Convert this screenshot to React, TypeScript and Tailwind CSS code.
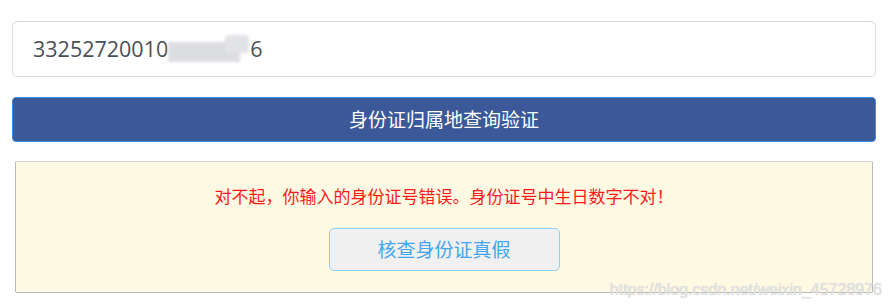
import React from 'react';

const cjk = { fontFamily: '"Noto Sans CJK SC", "Noto Sans", sans-serif' };

export default function App() {
  return (
    <div className="relative w-[892px] h-[308px] bg-white overflow-hidden pt-[21px]" style={cjk}>
      <div className="ml-[12px] w-[864px] h-[56px] flex items-center rounded-[5px] border border-[#d6dbe0] bg-white pl-[20px] text-[21.5px] text-[#495057]" style={{ fontFamily: '"Open Sans", "Noto Sans", sans-serif' }}>
        <span>33252720010</span>
        <span className="relative inline-block w-[82px] h-[28px]">
          <span className="absolute left-[0px] top-[7px] w-[72px] h-[20px] bg-[#dcdde0] blur-[1.5px]" />
          <span className="absolute left-[57px] top-[0px] w-[24px] h-[18px] rounded-[4px] bg-[#e2e3e6] blur-[1.5px]" />
        </span>
        <span>6</span>
      </div>

      <button className="ml-[12px] mt-[20px] w-[864px] h-[45px] rounded-[4px] border border-[#3f8fe8] bg-[#3b5998] text-white text-[19px] flex items-center justify-center">
        身份证归属地查询验证
      </button>

      <div className="ml-[15px] mt-[19px] w-[858px] h-[132px] rounded-[2px] border border-[#b8b8b8] border-t-[#cfcfcf] bg-[#fef9e3] flex flex-col items-center pt-[22px]">
        <p className="text-[17px] leading-[24px] text-[#ff1a1a]">对不起，你输入的身份证号错误。身份证号中生日数字不对！</p>
        <button className="mt-[20px] w-[231px] h-[43px] rounded-[5px] border border-[#8dd0f4] bg-[#f0f0f0] text-[19px] text-[#45a6f0] flex items-center justify-center">
          核查身份证真假
        </button>
      </div>

      <div className="absolute right-[10px] bottom-[8px] text-[16px] leading-[20px] text-[#e4e4e4]" style={{ fontFamily: '"Liberation Sans", Arial, sans-serif', textShadow: '0 0 1px #c4c4c4' }}>
        https://blog.csdn.net/weixin_45728976
      </div>
    </div>
  );
}
